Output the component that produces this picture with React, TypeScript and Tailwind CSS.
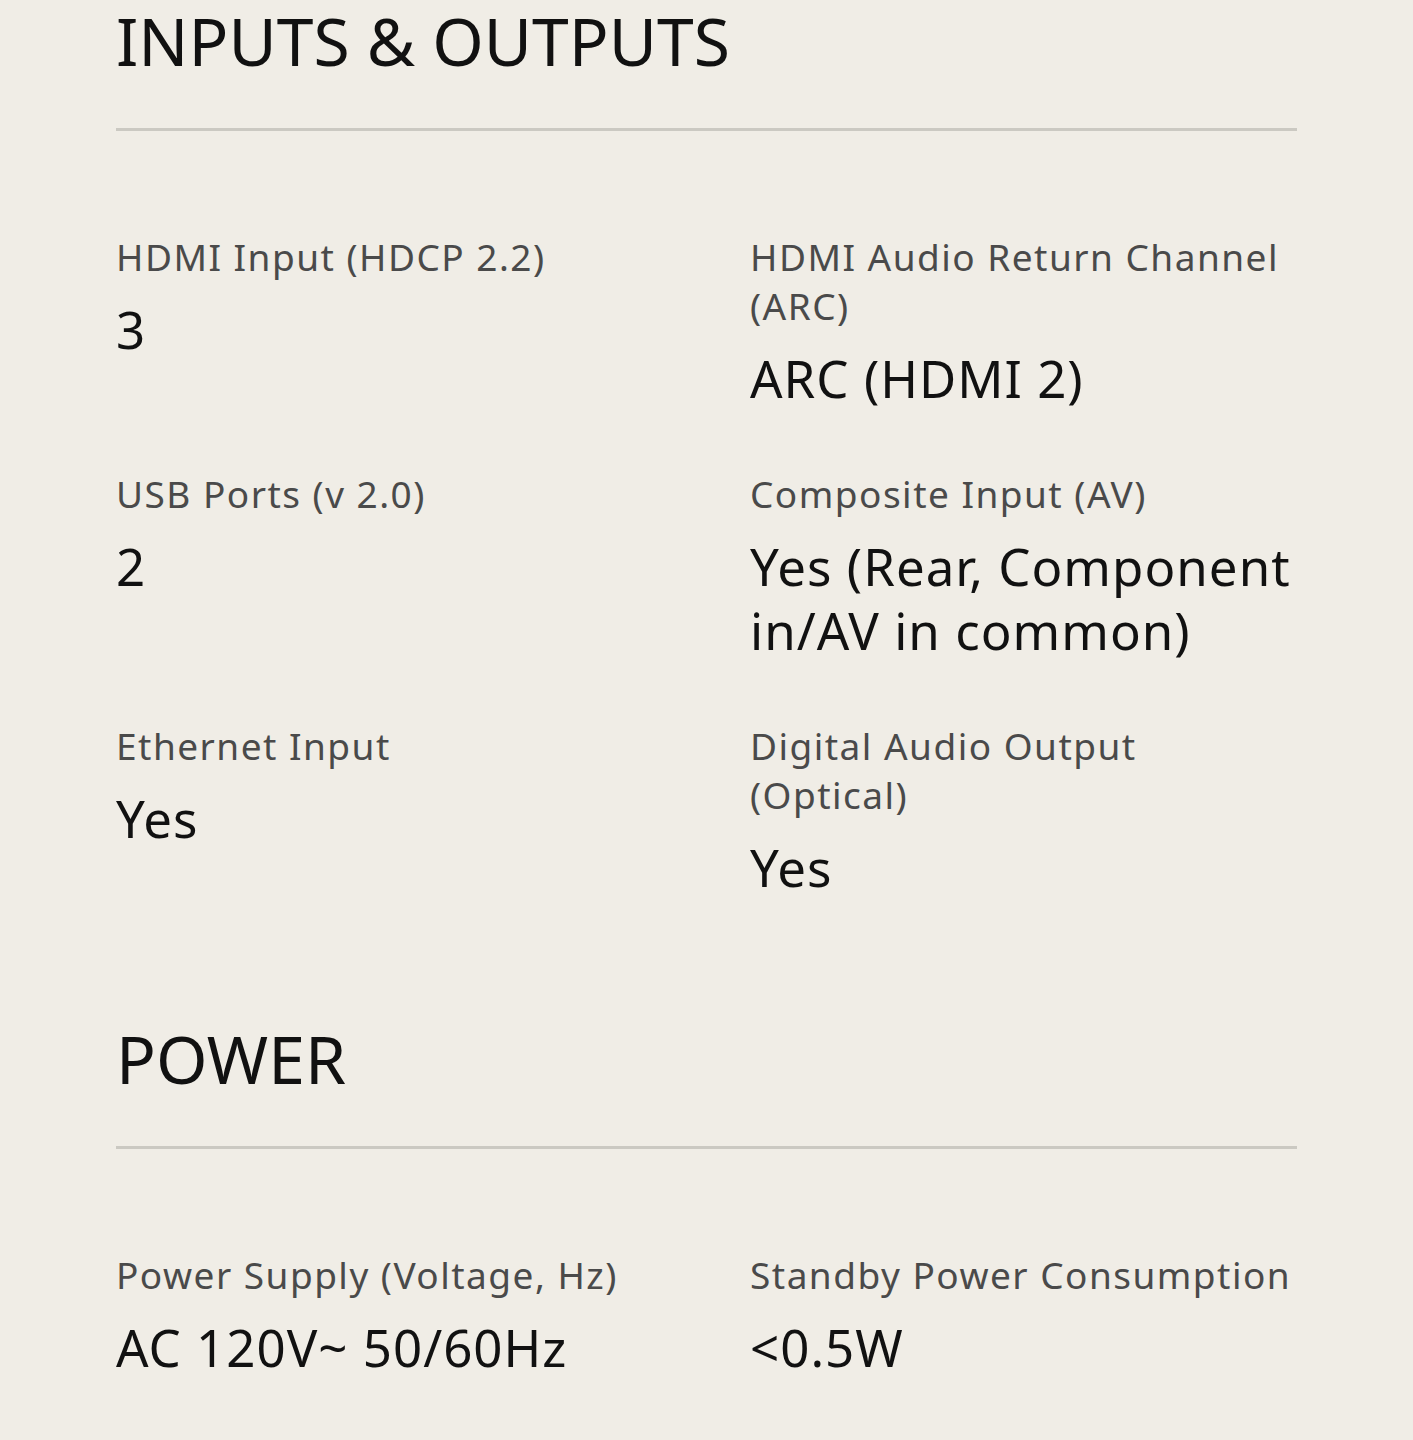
const SECTIONS: { title: string; specs: { label: string; value: string }[] }[] = [
  {
    title: 'INPUTS & OUTPUTS',
    specs: [
      { label: 'HDMI Input (HDCP 2.2)', value: '3' },
      { label: 'HDMI Audio Return Channel (ARC)', value: 'ARC (HDMI 2)' },
      { label: 'USB Ports (v 2.0)', value: '2' },
      { label: 'Composite Input (AV)', value: 'Yes (Rear, Component in/AV in common)' },
      { label: 'Ethernet Input', value: 'Yes' },
      { label: 'Digital Audio Output (Optical)', value: 'Yes' },
    ],
  },
  {
    title: 'POWER',
    specs: [
      { label: 'Power Supply (Voltage, Hz)', value: 'AC 120V~ 50/60Hz' },
      { label: 'Standby Power Consumption', value: '<0.5W' },
    ],
  },
];

export default function App() {
  return (
    <div className="min-h-[1440px] bg-[#f0ede6] px-[116px] pb-16 font-['Noto_Sans',sans-serif] text-[#111]">
      {SECTIONS.map((section, i) => (
        <section key={section.title} className={i > 0 ? 'mt-[119px]' : ''}>
          {/* Section title + rule */}
          <h2 className="pt-px text-[66px] leading-[79px] font-normal text-[#111]">{section.title}</h2>
          <div className="mt-[48px] h-[3px] w-[1181px] bg-[#cbc9c2]" />

          <div className="mt-[101px] grid w-[1181px] grid-cols-2 gap-x-[87px] gap-y-[59px]">
            {section.specs.map((s) => (
              <div key={s.label}>
                <p className="text-[37px] leading-[49px] tracking-[0.04em] text-[#4a4a4a]">{s.label}</p>
                <p className="mt-4 text-[51px] leading-[64px] tracking-[0.02em] text-[#111]">{s.value}</p>
              </div>
            ))}
          </div>
        </section>
      ))}
    </div>
  );
}
